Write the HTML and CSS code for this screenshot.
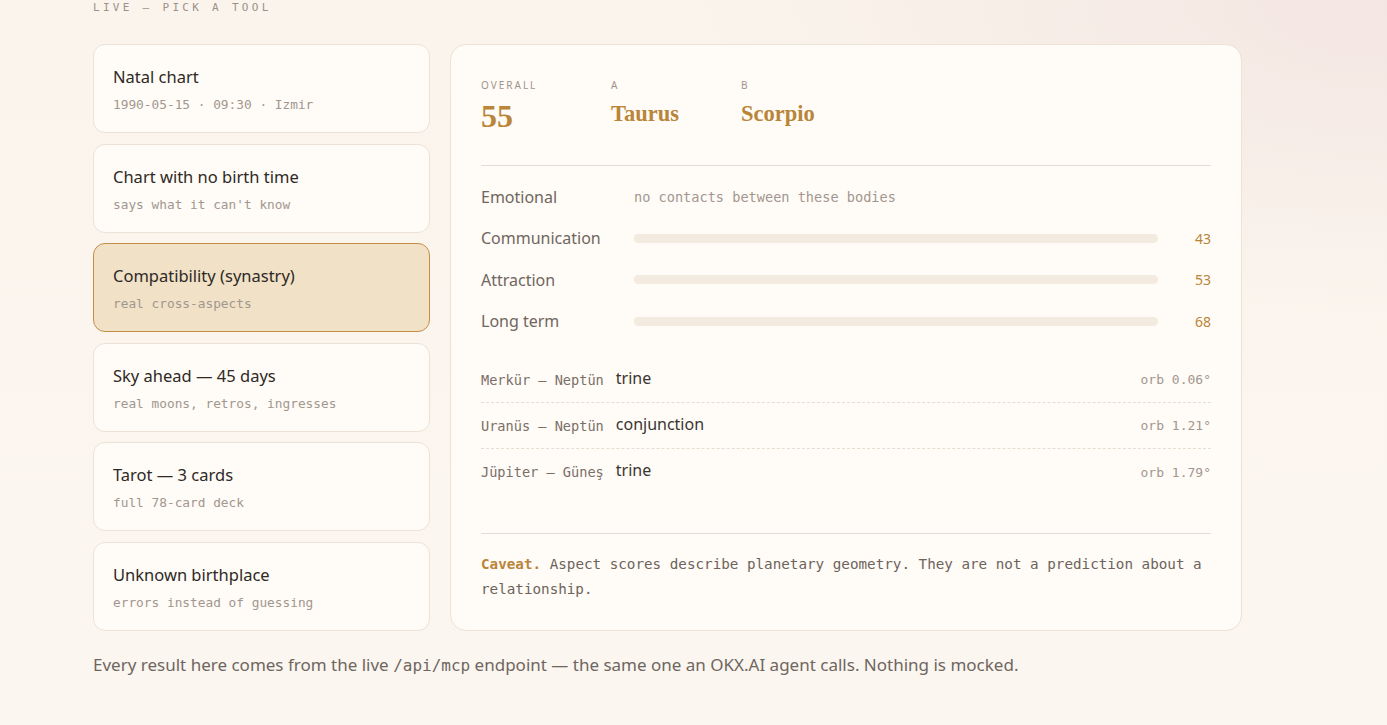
FILE: index.html
```html
<!DOCTYPE html>
<html lang="en">
<head>
  <meta charset="UTF-8">
  <meta name="viewport" content="width=device-width, initial-scale=1">
  <title>Live tools</title>
  <link rel="stylesheet" href="styles.css">
</head>
<body>

<section class="live">
    <div class="eyebrow">LIVE — PICK A TOOL</div>

    <div class="live-grid">
        <div class="tool-list">
            <button class="tool">
                <span class="tool-title">Natal chart</span>
                <span class="tool-sub">1990-05-15 · 09:30 · Izmir</span>
            </button>
            <button class="tool">
                <span class="tool-title">Chart with no birth time</span>
                <span class="tool-sub">says what it can't know</span>
            </button>
            <button class="tool active">
                <span class="tool-title">Compatibility (synastry)</span>
                <span class="tool-sub">real cross-aspects</span>
            </button>
            <button class="tool">
                <span class="tool-title">Sky ahead — 45 days</span>
                <span class="tool-sub">real moons, retros, ingresses</span>
            </button>
            <button class="tool">
                <span class="tool-title">Tarot — 3 cards</span>
                <span class="tool-sub">full 78-card deck</span>
            </button>
            <button class="tool">
                <span class="tool-title">Unknown birthplace</span>
                <span class="tool-sub">errors instead of guessing</span>
            </button>
        </div>

        <div class="result">
            <div class="result-head">
                <div class="stat">
                    <div class="stat-label">OVERALL</div>
                    <div class="stat-value big">55</div>
                </div>
                <div class="stat">
                    <div class="stat-label">A</div>
                    <div class="stat-value">Taurus</div>
                </div>
                <div class="stat">
                    <div class="stat-label">B</div>
                    <div class="stat-value">Scorpio</div>
                </div>
            </div>

            <div class="scores">
                <div class="score-row">
                    <span class="score-name">Emotional</span>
                    <span class="score-empty">no contacts between these bodies</span>
                </div>
                <div class="score-row">
                    <span class="score-name">Communication</span>
                    <div class="bar"><div class="bar-fill" style="width: 43%"></div></div>
                    <span class="score-num">43</span>
                </div>
                <div class="score-row">
                    <span class="score-name">Attraction</span>
                    <div class="bar"><div class="bar-fill" style="width: 53%"></div></div>
                    <span class="score-num">53</span>
                </div>
                <div class="score-row">
                    <span class="score-name">Long term</span>
                    <div class="bar"><div class="bar-fill" style="width: 68%"></div></div>
                    <span class="score-num">68</span>
                </div>
            </div>

            <div class="aspects">
                <div class="aspect">
                    <span class="pair">Merkür – Neptün</span>
                    <span class="kind">trine</span>
                    <span class="orb">orb 0.06°</span>
                </div>
                <div class="aspect">
                    <span class="pair">Uranüs – Neptün</span>
                    <span class="kind">conjunction</span>
                    <span class="orb">orb 1.21°</span>
                </div>
                <div class="aspect">
                    <span class="pair">Jüpiter – Güneş</span>
                    <span class="kind">trine</span>
                    <span class="orb">orb 1.79°</span>
                </div>
            </div>

            <p class="caveat"><b>Caveat.</b> Aspect scores describe planetary geometry. They are not a prediction about a relationship.</p>
        </div>
    </div>

    <p class="footnote">Every result here comes from the live <code>/api/mcp</code> endpoint — the same one an OKX.AI agent calls. Nothing is mocked.</p>
</section>

</body>
</html>
```

FILE: styles.css
```css
:root {
    --ink: #2e2925;
    --muted: #6f6660;
    --faint: #a2978f;
    --gold: #b98539;
    --card: #fffbf6;
    --line: #ece2d5;
    --track: #f4ebe0;
    --sans: "Noto Sans", "Open Sans", sans-serif;
    --mono: "DejaVu Sans Mono", "Liberation Mono", monospace;
    --serif: "Liberation Serif", "DejaVu Serif", serif;
}

* {
    margin: 0;
    padding: 0;
    box-sizing: border-box;
}

body {
    font-family: var(--sans);
    color: var(--ink);
    min-height: 100vh;
    background:
        radial-gradient(ellipse 700px 320px at 100% 0%, #f4e6e2 0%, rgba(244, 230, 226, 0) 100%),
        linear-gradient(180deg, #faf4ec 0%, #fbf6f0 100%);
}

.live {
    padding: 0 0 40px 93px;
    width: 1242px;
}

.eyebrow {
    font-family: var(--mono);
    font-size: 11px;
    letter-spacing: 0.3em;
    color: #9b918a;
    line-height: 14px;
    margin-top: 1px;
}

.live-grid {
    display: grid;
    grid-template-columns: 337px 1fr;
    gap: 20px;
    margin-top: 29px;
}

.tool-list {
    display: flex;
    flex-direction: column;
    gap: 10.5px;
}

.tool {
    display: flex;
    flex-direction: column;
    gap: 9px;
    height: 89px;
    padding: 21px 19px 0;
    text-align: left;
    background: var(--card);
    border: 1px solid var(--line);
    border-radius: 12px;
    cursor: pointer;
}

.tool.active {
    background: #f0e1c7;
    border-color: #c38f48;
}

.tool-title {
    font-family: var(--sans);
    font-size: 16.5px;
    color: var(--ink);
    line-height: 22px;
}

.tool-sub {
    font-family: var(--mono);
    font-size: 12.8px;
    color: var(--faint);
    line-height: 16px;
}

.result {
    background: var(--card);
    border: 1px solid var(--line);
    border-radius: 16px;
    padding: 30px 30px 25px;
}

.result-head {
    display: flex;
    padding: 3px 0 31px;
    border-bottom: 1px solid #e6ddd2;
}

.stat {
    width: 130px;
}

.stat-label {
    font-size: 10px;
    letter-spacing: 0.2em;
    color: #9f948c;
    line-height: 14px;
}

.stat-value {
    font-family: var(--serif);
    font-weight: bold;
    font-size: 22.5px;
    color: var(--gold);
    margin-top: 8px;
    line-height: 28px;
}

.stat-value.big {
    font-size: 32px;
    line-height: 36px;
    margin-top: 6px;
}

.scores {
    padding-top: 10px;
    display: flex;
    flex-direction: column;
}

.score-row {
    display: grid;
    grid-template-columns: 153px 1fr 53px;
    align-items: center;
    height: 41.5px;
}

.score-name {
    font-size: 16px;
    color: var(--muted);
}

.score-empty {
    font-family: var(--mono);
    font-size: 13.6px;
    color: var(--faint);
    grid-column: 2 / 4;
}

.bar {
    height: 9px;
    background: var(--track);
    border-radius: 5px;
    overflow: hidden;
}

.bar-fill {
    height: 100%;
    background: var(--track);
}

.score-num {
    text-align: right;
    font-size: 14px;
    color: var(--gold);
}

.aspects {
    margin-top: 15px;
}

.aspect {
    display: flex;
    align-items: center;
    gap: 12px;
    height: 46px;
    border-bottom: 1px dashed #e6ddd2;
}

.aspect:last-child {
    border-bottom: none;
}

.pair {
    font-family: var(--mono);
    font-size: 13.6px;
    color: #7a6f68;
}

.kind {
    font-size: 16px;
    color: #3b3531;
    margin-top: -4px;
}

.orb {
    margin-left: auto;
    font-family: var(--mono);
    font-size: 13px;
    color: var(--faint);
}

.caveat {
    margin-top: 38px;
    padding-top: 18px;
    border-top: 1px solid #e6ddd2;
    font-family: var(--mono);
    font-size: 14.25px;
    line-height: 25px;
    color: #6d635c;
}

.caveat b {
    color: var(--gold);
}

.footnote {
    margin-top: 22px;
    font-size: 17px;
    color: var(--muted);
}

.footnote code {
    font-family: var(--mono);
    font-size: 16px;
}
```
